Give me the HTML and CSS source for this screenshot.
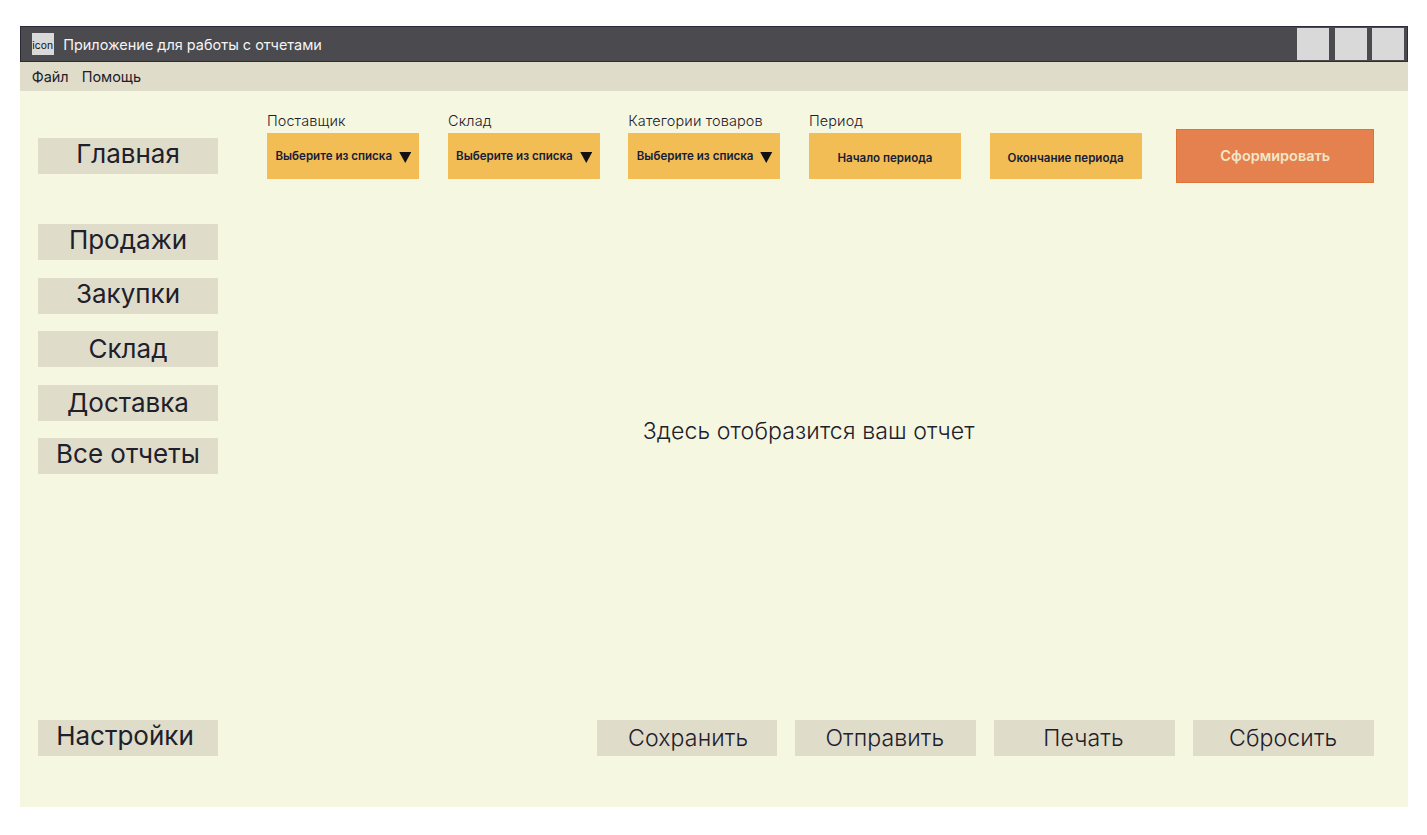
FILE: index.html
```html
<!DOCTYPE html>
<html lang="ru">
<head>
<meta charset="utf-8">
<title>Приложение для работы с отчетами</title>
<link rel="stylesheet" href="styles.css">
</head>
<body>
<div class="window">
  <header class="titlebar">
    <span class="app-icon">icon</span>
    <span class="app-title">Приложение для работы с отчетами</span>
    <div class="controls"><i class="control"></i><i class="control"></i><i class="control"></i></div>
  </header>
  <nav class="menubar"><span class="menu-file">Файл</span><span class="menu-help">Помощь</span></nav>
  <div class="body">
    <aside class="sidebar">
      <div class="nav-item raised">Главная</div>
      <div class="nav-group">
        <div class="nav-item raised">Продажи</div>
        <div class="nav-item raised">Закупки</div>
        <div class="nav-item">Склад</div>
        <div class="nav-item">Доставка</div>
        <div class="nav-item high">Все отчеты</div>
      </div>
      <div class="nav-item raised settings">Настройки</div>
    </aside>
    <main class="main">
      <section class="filters">
        <div class="field"><label class="label">Поставщик</label><div class="box select"><span class="select-text">Выберите из списка</span><svg class="arrow" viewBox="0 0 12 11"><path d="M0 0H12L6 11Z"/></svg></div></div>
        <div class="field"><label class="label label-stock">Склад</label><div class="box select"><span class="select-text">Выберите из списка</span><svg class="arrow" viewBox="0 0 12 11"><path d="M0 0H12L6 11Z"/></svg></div></div>
        <div class="field"><label class="label">Категории товаров</label><div class="box select"><span class="select-text">Выберите из списка</span><svg class="arrow" viewBox="0 0 12 11"><path d="M0 0H12L6 11Z"/></svg></div></div>
        <div class="field"><label class="label">Период</label><div class="box date"><span class="date-text">Начало периода</span></div></div>
        <div class="field"><div class="box date"><span class="date-text">Окончание периода</span></div></div>
        <div class="submit"><span class="submit-text">Сформировать</span></div>
      </section>
      <section class="report"><span class="report-text">Здесь отобразится ваш отчет</span></section>
      <footer class="actions">
        <div class="action action-save"><span class="save-text">Сохранить</span></div>
        <div class="action action-send"><span class="send-text">Отправить</span></div>
        <div class="action action-print"><span class="print-text">Печать</span></div>
        <div class="action"><span class="reset-text">Сбросить</span></div>
      </footer>
    </main>
  </div>
</div>
</body>
</html>
```
FILE: styles.css
```css
* { box-sizing: border-box; }
body { margin: 0; padding: 26px 19.5px 0 19.7px; height: 835px; background: #fff; font-family: Inter, "Liberation Sans", sans-serif; color: #1e202c; overflow: hidden; }
span { white-space: nowrap; }
.window { display: flex; flex-direction: column; height: 780.5px; background: #f5f7e1; }
.titlebar { display: flex; align-items: center; height: 36px; padding: 0 2.3px 0 11px; background: #4a4a4f; border: 1px solid #2a2c3a; }
.app-icon { width: 22px; height: 22px; background: #d9d9d9; color: #111; font-size: 10.3px; line-height: 24px; text-align: center; }
.app-title { margin-left: 9.5px; color: #f5f5f5; font-size: 14.46px; line-height: 20px; padding-top: 2px; }
.controls { display: flex; gap: 5.5px; margin-left: auto; }
.control { width: 32px; height: 32px; background: #d9d9d9; }
.menubar { display: flex; gap: 13px; height: 29px; padding-left: 12px; background: #dfdcc9; font-size: 14.46px; line-height: 29px; }
.body { display: flex; flex: 1; min-height: 0; padding: 0 34px 50.5px 18px; }
.sidebar { display: flex; flex-direction: column; width: 180.6px; padding-top: 47px; }
.nav-item { height: 36px; background: #dfdcc9; font-size: 26px; line-height: 36px; text-align: center; white-space: nowrap; }
.raised { line-height: 32px; }
.high { line-height: 31px; }
.nav-group { display: flex; flex-direction: column; gap: 17.5px; margin-top: 50px; }
.settings { margin-top: auto; padding-right: 6px; }
.main { display: flex; flex-direction: column; flex: 1; margin-left: 48.6px; }
.filters { display: flex; align-items: flex-end; gap: 28.7px; height: 92px; }
.field { flex: none; width: 152px; padding-bottom: 4px; }
.label { display: block; padding-bottom: 2px; font-size: 14.46px; font-weight: 300; line-height: 20px; letter-spacing: 0.13px; white-space: nowrap; }
.label-stock { padding-left: 0.5px; }
.box { display: flex; align-items: center; height: 46px; background: #f2bd55; color: #151c38; font-size: 11.57px; font-weight: 600; }
.select { padding: 0 7.5px 0 8.5px; justify-content: space-between; }
.arrow { width: 12.5px; height: 11px; margin-top: 3px; fill: #111; }
.date { justify-content: center; padding-top: 3px; }
.submit { width: 197.5px; height: 54.5px; margin-left: auto; padding-left: 1px; border: 1px solid #e27233; background: #e5814f; color: #f1e7c8; font-size: 14.46px; font-weight: 600; line-height: 52px; text-align: center; }
.report { display: flex; flex: 1; align-items: center; justify-content: center; padding: 0 23px 42px 0; font-size: 23.1px; font-weight: 300; letter-spacing: 0.1px; }
.actions { display: flex; justify-content: flex-end; gap: 18px; }
.action { width: 180.7px; height: 36px; background: #dfdcc9; font-size: 23.1px; font-weight: 300; line-height: 36px; letter-spacing: 0.1px; text-align: center; }
.action-save { padding-left: 2px; }
.action-send, .action-print { padding-right: 2px; }
```
